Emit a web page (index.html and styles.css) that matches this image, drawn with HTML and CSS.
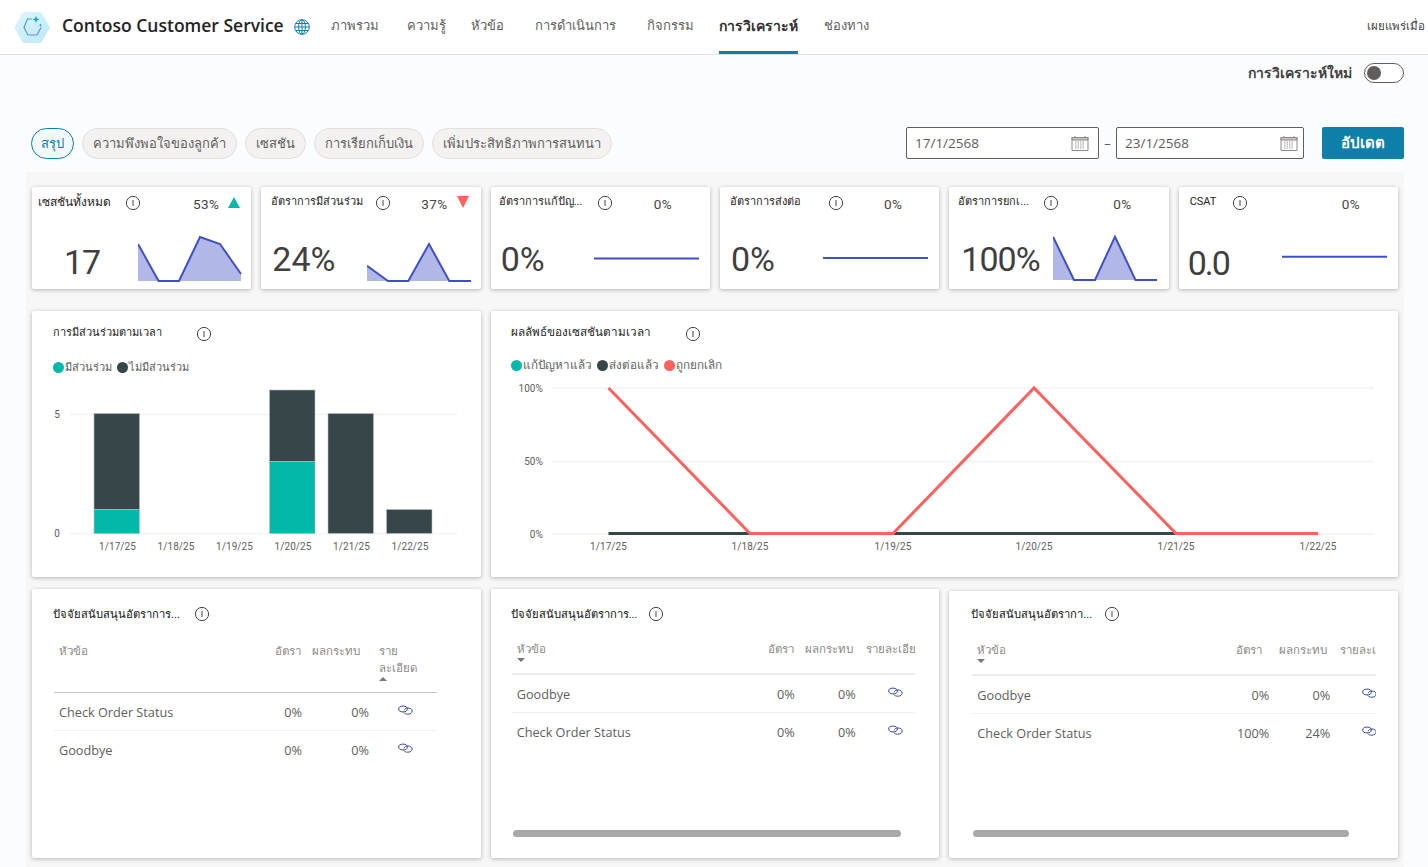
FILE: index.html
```html
<!DOCTYPE html>
<html lang="th">
<head>
<meta charset="utf-8">
<title>Contoso Customer Service</title>
<link rel="stylesheet" href="styles.css">
</head>
<body>
<svg class="defs" width="0" height="0" aria-hidden="true">
  <symbol id="info" viewBox="0 0 16 16"><circle cx="8" cy="8" r="6.6" fill="none" stroke="#444" stroke-width="1"/><path d="M8 5v6" stroke="#444" stroke-width="1"/></symbol>
  <symbol id="link" viewBox="0 0 15 11"><ellipse cx="5" cy="4" rx="4.3" ry="2.9" fill="none" stroke="#3b4a9c" stroke-width="1"/><path d="M6.2 5.3c.2-1.4 1.8-2.3 3.6-2.3 2.500 0 4.400 1.200 4.400 3s-1.900 3.200-4.400 3.200c-1.900 0-3.300-.6-4-1.600" fill="none" stroke="#3b4a9c" stroke-width="1"/></symbol>
  <symbol id="cal" viewBox="0 0 18 16"><path d="M1 2.500h16v13H1z" fill="#fff" stroke="#8a8886"/><path d="M1 2.500h16v2.500H1z" fill="#c8c6c4" stroke="#8a8886"/><path d="M4 1v2M14 1v2" stroke="#8a8886"/><path d="M4 7h10M4 9h10M4 11h10M4 13h10" stroke="#a19f9d" stroke-dasharray="1.500 1"/></symbol>
</svg>

<header class="topbar">
  <svg class="logo" width="36" height="31" viewBox="0 0 36 31">
    <defs><linearGradient id="lg" x1="0" y1="0" x2="1" y2="1"><stop offset="0" stop-color="#dff5fe"/><stop offset="1" stop-color="#bce8fb"/></linearGradient>
    <linearGradient id="ls" x1="0" y1="0" x2="1" y2="1"><stop offset="0" stop-color="#35a7e8"/><stop offset="1" stop-color="#7b83e6"/></linearGradient></defs>
    <path d="M9 0h18l9 15.500L27 31H9L0 15.500z" fill="url(#lg)"/>
    <path d="M18 7h-4.500L10 15.500 14 23h9l4-7.500" fill="none" stroke="url(#ls)" stroke-width="1.200"/>
    <path d="M22 3.500c.4 2.600 1.300 3.500 3.700 3.900-2.400.4-3.300 1.300-3.700 3.900-.4-2.600-1.300-3.500-3.700-3.900 2.400-.4 3.300-1.300 3.700-3.900zM26.500 11c.2 1.400.7 1.900 2 2.100-1.300.2-1.800.7-2 2.100-.2-1.400-.7-1.900-2-2.100 1.300-.2 1.800-.7 2-2.100z" fill="#1aa7dc"/>
  </svg>
  <span class="brand">Contoso Customer Service</span>
  <svg class="globe" width="16" height="16" viewBox="0 0 16 16" fill="none" stroke="#1480a8"><circle cx="8" cy="8" r="7.300"/><ellipse cx="8" cy="8" rx="3.400" ry="7.300"/><path d="M8 .7v14.600M.7 8h14.600M1.700 4.500h12.600M1.700 11.500h12.600"/></svg>
  <nav class="nav">
    <a class="nav-item">ภาพรวม</a>
    <a class="nav-item">ความรู้</a>
    <a class="nav-item tight">หัวข้อ</a>
    <a class="nav-item wide">การดำเนินการ</a>
    <a class="nav-item wide">กิจกรรม</a>
    <a class="nav-item tight active">การวิเคราะห์</a>
    <a class="nav-item">ช่องทาง</a>
  </nav>
  <span class="published">เผยแพร่เมื่อ</span>
</header>

<main class="main">
  <div class="toggle-row">
    <span class="toggle-label">การวิเคราะห์ใหม่</span>
    <span class="toggle"><span class="knob"></span></span>
  </div>
  <div class="filter-row">
    <div class="pills">
      <span class="pill on">สรุป</span>
      <span class="pill">ความพึงพอใจของลูกค้า</span>
      <span class="pill">เซสชัน</span>
      <span class="pill">การเรียกเก็บเงิน</span>
      <span class="pill">เพิ่มประสิทธิภาพการสนทนา</span>
    </div>
    <div class="dates">
      <span class="date"><span>17/1/2568</span><svg class="cal"><use href="#cal"/></svg></span>
      <span class="dash">–</span>
      <span class="date d2"><span>23/1/2568</span><svg class="cal"><use href="#cal"/></svg></span>
      <span class="update">อัปเดต</span>
    </div>
  </div>

  <section class="panel">
    <article class="card kpi k1">
      <div class="kpi-head"><span class="kpi-title">เซสชันทั้งหมด</span><svg class="info"><use href="#info"/></svg><span class="delta">53%<i class="tri up"></i></span></div>
      <div class="kpi-body"><span class="kpi-value">17</span>
        <svg class="spark" viewBox="0 0 106 50"><path class="area" d="M0 9 20.600 46H41L62 2 82 9 103 39V46H0z"/><path class="line" d="M0 9 20.600 46H41L62 2 82 9 103 39"/></svg></div>
    </article>
    <article class="card kpi k2">
      <div class="kpi-head"><span class="kpi-title">อัตราการมีส่วนร่วม</span><svg class="info"><use href="#info"/></svg><span class="delta">37%<i class="tri down"></i></span></div>
      <div class="kpi-body"><span class="kpi-value">24%</span>
        <svg class="spark" viewBox="0 0 106 50"><path class="area" d="M0 30.700 21 46H41.300L62 9 82.300 46H0z"/><path class="line" d="M0 30.700 21 46H41.300L62 9 82.300 46H104"/></svg></div>
    </article>
    <article class="card kpi k3">
      <div class="kpi-head"><span class="kpi-title">อัตราการแก้ปัญ...</span><svg class="info"><use href="#info"/></svg><span class="delta">0%</span></div>
      <div class="kpi-body"><span class="kpi-value">0%</span>
        <svg class="spark" viewBox="0 0 106 50"><path class="line" d="M0 23.500H105"/></svg></div>
    </article>
    <article class="card kpi k4">
      <div class="kpi-head"><span class="kpi-title">อัตราการส่งต่อ</span><svg class="info"><use href="#info"/></svg><span class="delta">0%</span></div>
      <div class="kpi-body"><span class="kpi-value">0%</span>
        <svg class="spark" viewBox="0 0 106 50"><path class="line" d="M0 23H105"/></svg></div>
    </article>
    <article class="card kpi k5">
      <div class="kpi-head"><span class="kpi-title">อัตราการยกเ...</span><svg class="info"><use href="#info"/></svg><span class="delta">0%</span></div>
      <div class="kpi-body"><span class="kpi-value">100%</span>
        <svg class="spark" viewBox="0 0 106 50"><path class="area" d="M0 1.700 21 45H42L62 1.700 82.500 45H0z"/><path class="line" d="M0 1.700 21 45H42L62 1.700 82.500 45H104"/></svg></div>
    </article>
    <article class="card kpi k6">
      <div class="kpi-head"><span class="kpi-title">CSAT</span><svg class="info"><use href="#info"/></svg><span class="delta">0%</span></div>
      <div class="kpi-body"><span class="kpi-value">0.0</span>
        <svg class="spark" viewBox="0 0 106 50"><path class="line" d="M0 21.700H105"/></svg></div>
    </article>

    <article class="card chart c-left">
      <div class="chart-head"><span class="chart-title">การมีส่วนร่วมตามเวลา</span><svg class="info"><use href="#info"/></svg></div>
      <div class="legend"><span class="lg"><i class="dot teal"></i>มีส่วนร่วม</span><span class="lg"><i class="dot dark"></i>ไม่มีส่วนร่วม</span></div>
      <svg class="plot" width="449" height="190" viewBox="0 0 449 190">
        <path class="grid" d="M38 34.500H425M38 153.500H425"/>
        <text class="axis" x="25" y="38" text-anchor="middle">5</text>
        <text class="axis" x="25" y="157" text-anchor="middle">0</text>
        <g class="bars">
          <rect class="b-dark" x="62" y="33.500" width="45.500" height="96"/><rect class="b-teal" x="62" y="129.500" width="45.500" height="24"/>
          <rect class="b-dark" x="237.500" y="10" width="45.500" height="71.500"/><rect class="b-teal" x="237.500" y="81.500" width="45.500" height="72"/>
          <rect class="b-dark" x="296" y="33.500" width="45.500" height="120"/>
          <rect class="b-dark" x="354.500" y="129.500" width="45.500" height="24"/>
        </g>
        <g class="axis" text-anchor="middle">
          <text x="85.500" y="170">1/17/25</text><text x="144" y="170">1/18/25</text><text x="202.500" y="170">1/19/25</text>
          <text x="261" y="170">1/20/25</text><text x="319.500" y="170">1/21/25</text><text x="378" y="170">1/22/25</text>
        </g>
      </svg>
    </article>
    <article class="card chart c-right">
      <div class="chart-head"><span class="chart-title">ผลลัพธ์ของเซสชันตามเวลา</span><svg class="info"><use href="#info"/></svg></div>
      <div class="legend l2"><span class="lg"><i class="dot teal"></i>แก้ปัญหาแล้ว</span><span class="lg"><i class="dot dark"></i>ส่งต่อแล้ว</span><span class="lg"><i class="dot red"></i>ถูกยกเลิก</span></div>
      <svg class="plot p2" width="907" height="190" viewBox="0 0 907 190">
        <path class="grid" d="M61 8H883M61 81.500H883M61 154H883"/>
        <g class="axis" text-anchor="end"><text x="52" y="12">100%</text><text x="52" y="85">50%</text><text x="52" y="158">0%</text></g>
        <path class="s-dark" d="M117.500 153.500H827"/>
        <path class="s-red" d="M117.500 8 259 153.500H402L543 8 685 153.500H827"/>
        <g class="axis" text-anchor="middle">
          <text x="117.500" y="170">1/17/25</text><text x="259" y="170">1/18/25</text><text x="402" y="170">1/19/25</text>
          <text x="543" y="170">1/20/25</text><text x="685" y="170">1/21/25</text><text x="827" y="170">1/22/25</text>
        </g>
      </svg>
    </article>

    <article class="card tbl t1">
      <div class="chart-head"><span class="chart-title t-title">ปัจจัยสนับสนุนอัตราการ...</span><svg class="info"><use href="#info"/></svg></div>
      <div class="tbl-wrap">
        <table>
          <colgroup><col class="w-topic"><col class="w-rate"><col class="w-impact"><col class="w-det"></colgroup>
          <thead><tr><th class="txt">หัวข้อ</th><th>อัตรา</th><th>ผลกระทบ</th><th class="wrap">ราย ละเอียด<i class="sort up"></i></th></tr></thead>
          <tbody>
            <tr><td class="txt">Check Order Status</td><td class="num">0%</td><td class="num">0%</td><td class="ico"><svg class="lk"><use href="#link"/></svg></td></tr>
            <tr><td class="txt">Goodbye</td><td class="num">0%</td><td class="num">0%</td><td class="ico"><svg class="lk"><use href="#link"/></svg></td></tr>
          </tbody>
        </table>
      </div>
    </article>
    <article class="card tbl t2">
      <div class="chart-head"><span class="chart-title t-title">ปัจจัยสนับสนุนอัตราการ...</span><svg class="info"><use href="#info"/></svg></div>
      <div class="tbl-wrap">
        <table>
          <colgroup><col class="w-topic"><col class="w-rate"><col class="w-impact"><col class="w-det"></colgroup>
          <thead><tr><th class="txt">หัวข้อ<i class="sort down"></i></th><th>อัตรา</th><th>ผลกระทบ</th><th>รายละเอีย</th></tr></thead>
          <tbody>
            <tr><td class="txt">Goodbye</td><td class="num">0%</td><td class="num">0%</td><td class="ico"><svg class="lk"><use href="#link"/></svg></td></tr>
            <tr><td class="txt">Check Order Status</td><td class="num">0%</td><td class="num">0%</td><td class="ico"><svg class="lk"><use href="#link"/></svg></td></tr>
          </tbody>
        </table>
      </div>
      <div class="scroll"></div>
    </article>
    <article class="card tbl t3">
      <div class="chart-head"><span class="chart-title t-title">ปัจจัยสนับสนุนอัตรากา...</span><svg class="info"><use href="#info"/></svg></div>
      <div class="tbl-wrap">
        <table>
          <colgroup><col class="w-topic"><col class="w-rate"><col class="w-impact"><col class="w-det"></colgroup>
          <thead><tr><th class="txt">หัวข้อ<i class="sort down"></i></th><th>อัตรา</th><th>ผลกระทบ</th><th>รายละเ</th></tr></thead>
          <tbody>
            <tr><td class="txt">Goodbye</td><td class="num">0%</td><td class="num">0%</td><td class="ico"><svg class="lk"><use href="#link"/></svg></td></tr>
            <tr><td class="txt">Check Order Status</td><td class="num">100%</td><td class="num">24%</td><td class="ico"><svg class="lk"><use href="#link"/></svg></td></tr>
          </tbody>
        </table>
      </div>
      <div class="scroll"></div>
    </article>
  </section>
</main>
</body>
</html>
```
FILE: styles.css
```css
* { box-sizing: border-box; }
html, body { margin: 0; height: 867px; overflow: hidden; }
body { background: #fbfcfe; color: #323130; font-family: "Open Sans", "Noto Sans", "DejaVu Sans", sans-serif; font-size: 13px; }
.defs { position: absolute; }

/* top bar */
.topbar { height: 55px; background: #fff; border-bottom: 1px solid #e0e0e0; display: flex; align-items: center; padding-left: 14px; overflow: hidden; }
.logo { flex: none; margin-right: 12px; }
.brand { font-size: 17.500px; font-weight: 600; color: #242424; white-space: nowrap; margin-top: -5px; }
.globe { flex: none; margin-left: 10px; }
.nav { display: flex; height: 100%; margin-left: 21px; gap: 28px; }
.nav-item { display: flex; align-items: center; height: 100%; color: #605e5c; font-size: 13px; white-space: nowrap; border-bottom: 3px solid transparent; }
.nav-item.tight { margin-left: -3px; }
.nav-item.wide { margin-left: 3px; }
.nav-item.active { font-weight: 700; font-size: 14px; color: #323130; border-bottom-color: #0e7fa8; }
.nav-item.active + .nav-item { margin-left: -2px; }
.published { margin-left: auto; font-size: 11.500px; color: #424242; white-space: nowrap; margin-right: 3px; margin-top: -2px; }

/* filters */
.toggle-row { display: flex; justify-content: flex-end; align-items: center; gap: 12px; height: 20px; margin: 8px 24px 44px 0; }
.toggle-label { font-weight: 700; font-size: 14px; color: #424242; }
.toggle { width: 40px; height: 20px; border: 1px solid #605e5c; border-radius: 10px; background: #fff; display: flex; align-items: center; padding-left: 2px; }
.knob { width: 14px; height: 14px; border-radius: 50%; background: #605e5c; }
.filter-row { display: flex; justify-content: space-between; align-items: center; height: 32px; margin: 0 24px 13px 31px; }
.pills { display: flex; gap: 8px; }
.pill { height: 31px; border-radius: 16px; padding: 0 10px; display: flex; align-items: center; background: #f3f2f1; border: 1px solid #e1dfdd; color: #605e5c; font-size: 13px; white-space: nowrap; }
.pill.on { background: #f2f9fc; border-color: #0e7fa8; color: #0e7fa8; padding: 0 9px; }
.dates { display: flex; align-items: center; }
.date { width: 193px; height: 32px; background: #fff; border: 1px solid #605e5c; border-radius: 2px; padding: 0 9px 0 8px; display: flex; align-items: center; justify-content: space-between; font-size: 13.500px; color: #605e5c; }
.date.d2 { width: 188px; padding-right: 5px; }
.cal { width: 18px; height: 16px; }
.dash { width: 17px; text-align: center; color: #605e5c; }
.update { width: 82px; height: 32px; margin-left: 18px; background: #0e7fa8; color: #fff; border-radius: 2px; font-weight: 700; font-size: 15px; display: flex; align-items: center; justify-content: center; }

/* panel */
.panel { margin: 0 24px 0 26px; height: 700px; background: #f7f7f7; padding: 15px 6px 0; display: grid; grid-template-columns: repeat(6, 1fr); grid-template-rows: 102px 276px 269px; column-gap: 10px; row-gap: 12px; align-content: start; }
.card { background: #fff; border-radius: 2px; box-shadow: 0 1px 4px rgba(0,0,0,.28); min-width: 0; overflow: hidden; }
.info { width: 16px; height: 16px; flex: none; }

/* kpi */
.kpi { padding-top: 6px; display: flex; flex-direction: column; font-family: Roboto, "Open Sans", sans-serif; }
.kpi-head { display: grid; grid-template-columns: var(--tw) var(--ix) auto; padding-left: var(--pad); height: 20px; align-items: center; font-size: 11px; }
.kpi-title { color: #252423; white-space: nowrap; margin-top: -4px; }
.k1 .kpi-title { font-size: 12px; }
.kpi-head .info { margin-left: -1px; }
.delta { display: flex; align-items: center; gap: 9px; color: #444; font-size: 13.500px; letter-spacing: .4px; margin-top: 2px; white-space: nowrap; }
.tri { width: 0; height: 0; border-left: 6px solid transparent; border-right: 6px solid transparent; margin-top: -4px; }
.tri.up { border-bottom: 11px solid #01b8aa; }
.tri.down { border-top: 12px solid #fd625e; }
.kpi-body { display: grid; grid-template-columns: var(--sx) 106px; margin-top: 22px; }
.kpi-value { padding-left: var(--vx); padding-top: var(--vy); font-size: 34px; line-height: 46px; color: #3f3f3f; white-space: nowrap; }
.k1 .kpi-value { letter-spacing: -1px; }
.k5 .kpi-value { letter-spacing: -1px; }
.k6 .kpi-value { letter-spacing: -2px; }
.spark { width: 106px; height: 50px; display: block; }
.area { fill: #b1b7e7; }
.line { fill: none; stroke: #3f50c4; stroke-width: 2; }
.k1 { --pad: 6px; --tw: 88px; --ix: 67px; --vx: 32px; --vy: 4px; --sx: 106px; }
.k2 { --pad: 10px; --tw: 105px; --ix: 45px; --vx: 11px; --vy: 1px; --sx: 105.500px; }
.k3 { --pad: 8px; --tw: 99px; --ix: 56px; --vx: 10px; --vy: 1px; --sx: 103.500px; }
.k4 { --pad: 10px; --tw: 99px; --ix: 55px; --vx: 11px; --vy: 1px; --sx: 103px; }
.k5 { --pad: 9px; --tw: 86px; --ix: 69px; --vx: 12px; --vy: 1px; --sx: 103.500px; }
.k6 { --pad: 11px; --tw: 43px; --ix: 109px; --vx: 9px; --vy: 5px; --sx: 103.500px; }

/* charts */
.chart { font-family: Roboto, "Open Sans", sans-serif; grid-column: span 2; margin-top: 10px; height: 266px; }
.c-right { grid-column: span 4; }
.chart-head { display: flex; align-items: center; height: 16px; margin: 15px 0 0 21px; }
.chart-title { font-size: 11px; color: #252423; width: 143px; white-space: nowrap; margin-top: -4px; }
.c-right .chart-head { margin-left: 20px; }
.c-right .chart-title { width: 174px; font-size: 11.700px; }
.legend { display: flex; gap: 5px; height: 20px; margin: 15px 0 0 21px; font-size: 11px; color: #605e5c; align-items: center; }
.legend.l2 { margin: 13px 0 0 20px; font-size: 11.700px; }
.lg { display: flex; align-items: center; gap: 1px; white-space: nowrap; }
.dot { width: 11px; height: 11px; border-radius: 50%; }
.teal { background: #01b8aa; }
.dark { background: #374649; }
.red { background: #fd625e; }
.plot { display: block; margin-top: 3px; }
.p2 { margin-top: 5px; }
.grid { stroke: #f3f3f3; stroke-width: 1.500; fill: none; }
.axis { font-size: 10px; fill: #605e5c; letter-spacing: .1px; }
.bars rect { stroke: #b9bfc1; stroke-width: .6; }
.b-dark { fill: #374649; }
.b-teal { fill: #01b8aa; }
.s-dark { stroke: #374649; stroke-width: 3; fill: none; }
.s-red { stroke: #fd625e; stroke-width: 3; fill: none; }

/* tables */
.tbl { grid-column: span 2; position: relative; }
.t3 { margin-top: 2px; }
.tbl .chart-head { margin-top: 17px; }
.t3 .chart-head { margin-top: 15px; margin-left: 22px; }
.t-title { color: #111; font-family: Roboto, "Open Sans", sans-serif; font-size: 11.200px; margin-top: -1px; }
.t1 .t-title { width: 141px; }
.t2 .chart-head { margin-left: 20px; }
.t2 .t-title { width: 137px; }
.t3 .t-title { width: 133px; }
.tbl-wrap { margin-top: 18px; overflow: hidden; }
.t1 .tbl-wrap { margin-left: 22px; width: 383px; }
.t2 .tbl-wrap { margin-left: 21px; width: 403px; }
.t3 .tbl-wrap { margin-left: 23px; width: 404px; }
table { border-collapse: collapse; table-layout: fixed; width: 100%; }
.t1 .w-topic { width: 216px; } .t1 .w-rate { width: 37px; } .t1 .w-impact { width: 67px; } .t1 .w-det { width: 63px; }
.t2 .w-topic { width: 251px; } .t2 .w-rate { width: 37px; } .t2 .w-impact { width: 61px; } .t2 .w-det { width: 54px; }
.t3 .w-topic { width: 259px; } .t3 .w-rate { width: 43px; } .t3 .w-impact { width: 61px; } .t3 .w-det { width: 41px; }
th { font-weight: 400; font-size: 11.500px; color: #8a8886; text-align: left; padding: 2px 0 0 5px; vertical-align: top; white-space: nowrap; overflow: hidden; border-bottom: 2px solid #edebe9; line-height: 17px; }
.t1 th { height: 52px; border-bottom: 1px solid #c8c6c4; }
.t2 th { height: 34px; padding-top: 0; }
.t3 th { height: 35px; padding-top: 1px; }
th.wrap { white-space: normal; }
.sort { display: block; width: 0; height: 0; border-left: 4px solid transparent; border-right: 4px solid transparent; }
.sort.up { border-bottom: 4px solid #7a7574; margin-top: 1px; }
.sort.down { border-top: 4px solid #7a7574; margin-top: 1px; }
td { height: 38px; font-size: 12.700px; color: #605e5c; border-bottom: 1px solid #f0f0f0; padding: 2px 0 0; white-space: nowrap; overflow: hidden; }
tr:last-child td { border-bottom: 0; }
td.txt, th.txt { padding-left: 5px; }
td.num { text-align: right; padding-right: 5px; }
td.ico { padding: 0 0 2px 24px; }
.t2 td.ico, .t3 td.ico { padding-left: 27px; }
.lk { width: 15px; height: 11px; display: block; }
.scroll { position: absolute; height: 7px; background: #a9a9a9; border-radius: 4px; bottom: 21px; left: 22px; }
.t2 .scroll { width: 388px; }
.t3 .scroll { width: 376px; left: 24px; }
```
